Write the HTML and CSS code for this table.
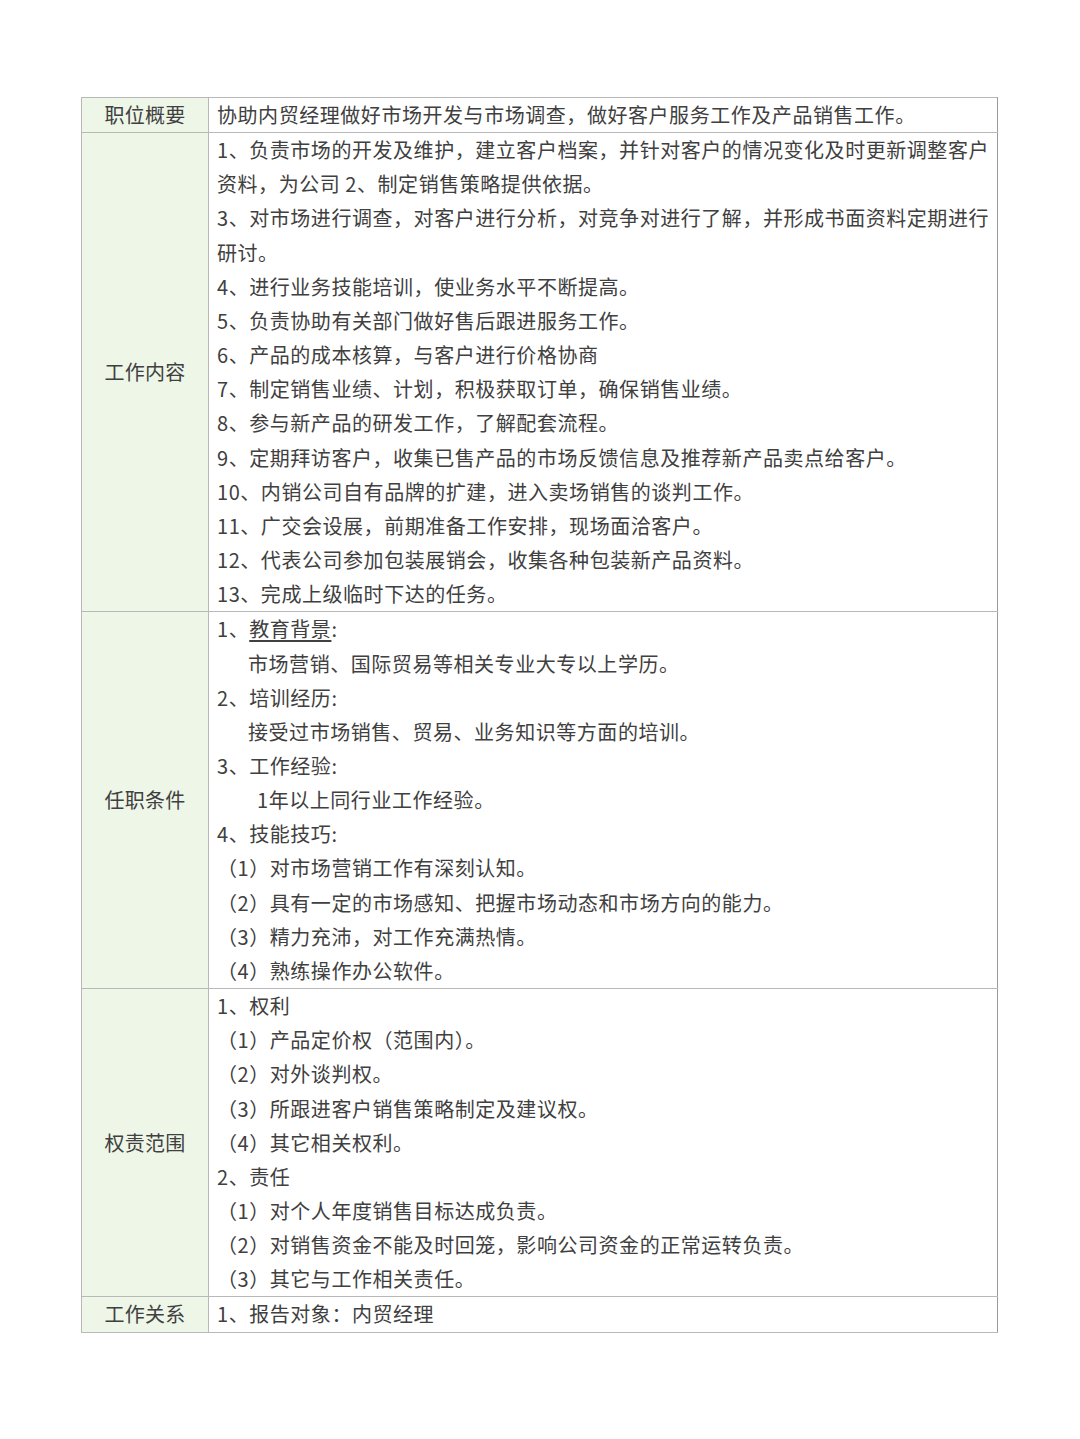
FILE: index.html
```html
<!DOCTYPE html>
<html lang="zh">
<head>
<meta charset="utf-8">
<link rel="stylesheet" href="styles.css">
</head>
<body>
<table class="jd">
  <tr>
    <th class="label">职位概要</th>
    <td class="content"><div class="ln">协助内贸经理做好市场开发与市场调查，做好客户服务工作及产品销售工作。</div></td>
  </tr>
  <tr>
    <th class="label">工作内容</th>
    <td class="content">
      <div class="ln">1、负责市场的开发及维护，建立客户档案，并针对客户的情况变化及时更新调整客户</div>
      <div class="ln">资料，为公司 2、制定销售策略提供依据。</div>
      <div class="ln">3、对市场进行调查，对客户进行分析，对竞争对进行了解，并形成书面资料定期进行</div>
      <div class="ln">研讨。</div>
      <div class="ln">4、进行业务技能培训，使业务水平不断提高。</div>
      <div class="ln">5、负责协助有关部门做好售后跟进服务工作。</div>
      <div class="ln">6、产品的成本核算，与客户进行价格协商</div>
      <div class="ln">7、制定销售业绩、计划，积极获取订单，确保销售业绩。</div>
      <div class="ln">8、参与新产品的研发工作，了解配套流程。</div>
      <div class="ln">9、定期拜访客户，收集已售产品的市场反馈信息及推荐新产品卖点给客户。</div>
      <div class="ln">10、内销公司自有品牌的扩建，进入卖场销售的谈判工作。</div>
      <div class="ln">11、广交会设展，前期准备工作安排，现场面洽客户。</div>
      <div class="ln">12、代表公司参加包装展销会，收集各种包装新产品资料。</div>
      <div class="ln">13、完成上级临时下达的任务。</div>
    </td>
  </tr>
  <tr>
    <th class="label">任职条件</th>
    <td class="content">
      <div class="ln">1、<span class="ul">教育背景</span>:</div>
      <div class="ln indent">市场营销、国际贸易等相关专业大专以上学历。</div>
      <div class="ln">2、培训经历:</div>
      <div class="ln indent">接受过市场销售、贸易、业务知识等方面的培训。</div>
      <div class="ln">3、工作经验:</div>
      <div class="ln indent2">1年以上同行业工作经验。</div>
      <div class="ln">4、技能技巧:</div>
      <div class="ln">（1）对市场营销工作有深刻认知。</div>
      <div class="ln">（2）具有一定的市场感知、把握市场动态和市场方向的能力。</div>
      <div class="ln">（3）精力充沛，对工作充满热情。</div>
      <div class="ln">（4）熟练操作办公软件。</div>
    </td>
  </tr>
  <tr>
    <th class="label">权责范围</th>
    <td class="content">
      <div class="ln">1、权利</div>
      <div class="ln">（1）产品定价权（范围内）。</div>
      <div class="ln">（2）对外谈判权。</div>
      <div class="ln">（3）所跟进客户销售策略制定及建议权。</div>
      <div class="ln">（4）其它相关权利。</div>
      <div class="ln">2、责任</div>
      <div class="ln">（1）对个人年度销售目标达成负责。</div>
      <div class="ln">（2）对销售资金不能及时回笼，影响公司资金的正常运转负责。</div>
      <div class="ln">（3）其它与工作相关责任。</div>
    </td>
  </tr>
  <tr>
    <th class="label">工作关系</th>
    <td class="content"><div class="ln">1、报告对象：内贸经理</div></td>
  </tr>
</table>
</body>
</html>
```
FILE: styles.css
```css
html, body {
  margin: 0;
  padding: 0;
  background: #ffffff;
}
body {
  padding: 97px 0 0 81px;
  font-family: "Noto Sans CJK SC", "Noto Sans", sans-serif;
  color: #404040;
}
.jd {
  border-collapse: collapse;
  width: 917px;
  table-layout: fixed;
}
.jd th, .jd td {
  border: 1px solid #b8b8b8;
  padding: 0;
  font-size: 20px;
  line-height: 34.15px;
  font-weight: 400;
}
.label {
  width: 126px;
  background: #eef6e8;
  text-align: center;
  vertical-align: middle;
  color: #404040;
}
.content {
  padding-left: 8px !important;
  text-align: left;
  vertical-align: top;
}
.jd tr > td.content {
  border-right-color: #9a9a9a;
}
.ln {
  white-space: nowrap;
  letter-spacing: 0.55px;
}
.label {
  letter-spacing: 0.3px;
}
.indent {
  padding-left: 31px;
}
.indent2 {
  padding-left: 40px;
}
.ul {
  text-decoration: underline;
  text-underline-offset: 3px;
}
```
